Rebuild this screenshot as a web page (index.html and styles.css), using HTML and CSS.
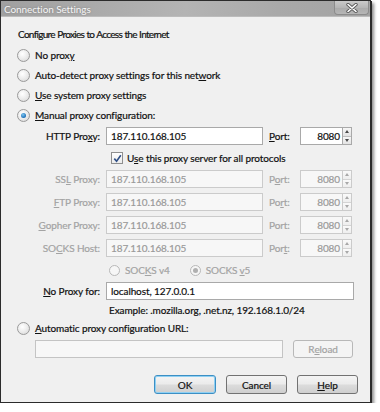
FILE: index.html
```html
<!DOCTYPE html>
<html>
<head>
<meta charset="utf-8">
<link rel="stylesheet" href="styles.css">
</head>
<body>
<div class="window">
  <div class="titlebar">
    <span class="title">Connection Settings</span>
    <div class="close">
      <svg width="12" height="10" viewBox="0 0 12 10">
        <path d="M2 1.5 L10 8.5 M10 1.5 L2 8.5" stroke="#5a5a5a" stroke-width="3.4" stroke-linecap="round"/>
        <path d="M2 1.5 L10 8.5 M10 1.5 L2 8.5" stroke="#ffffff" stroke-width="1.6" stroke-linecap="round"/>
      </svg>
    </div>
  </div>
  <div class="content">
    <div class="heading">Configure Proxies to Access the Internet</div>
    <div class="opt"><span class="radio"></span><span>No prox<u>y</u></span></div>
    <div class="opt"><span class="radio"></span><span>Auto-detect proxy settings for this net<u>w</u>ork</span></div>
    <div class="opt"><span class="radio"></span><span><u>U</u>se system proxy settings</span></div>
    <div class="opt"><span class="radio on"></span><span><u>M</u>anual proxy configuration:</span></div>

    <div class="prow first">
      <span class="plabel">HTTP Pro<u>x</u>y:</span>
      <div class="field">187.110.168.105</div>
      <span class="portlabel"><u>P</u>ort:</span>
      <div class="port"><div class="portval">8080</div><div class="spin"><span class="half"><i class="up"></i></span><span class="half"><i class="down"></i></span></div></div>
    </div>

    <div class="checkrow">
      <span class="check"><svg width="9" height="9" viewBox="0 0 9 9"><path d="M1.3 4.6 L3.6 7.2 L7.8 1.3" fill="none" stroke="#2f4f86" stroke-width="1.6"/></svg></span>
      <span>U<u>s</u>e this proxy server for all protocols</span>
    </div>

    <div class="prow dis ssl">
      <span class="plabel">SS<u>L</u> Proxy:</span>
      <div class="field">187.110.168.105</div>
      <span class="portlabel">P<u>o</u>rt:</span>
      <div class="port"><div class="portval">8080</div><div class="spin"><span class="half"><i class="up"></i></span><span class="half"><i class="down"></i></span></div></div>
    </div>
    <div class="prow dis">
      <span class="plabel"><u>F</u>TP Proxy:</span>
      <div class="field">187.110.168.105</div>
      <span class="portlabel">Po<u>r</u>t:</span>
      <div class="port"><div class="portval">8080</div><div class="spin"><span class="half"><i class="up"></i></span><span class="half"><i class="down"></i></span></div></div>
    </div>
    <div class="prow dis">
      <span class="plabel"><u>G</u>opher Proxy:</span>
      <div class="field">187.110.168.105</div>
      <span class="portlabel">Port:</span>
      <div class="port"><div class="portval">8080</div><div class="spin"><span class="half"><i class="up"></i></span><span class="half"><i class="down"></i></span></div></div>
    </div>
    <div class="prow dis">
      <span class="plabel">SO<u>C</u>KS Host:</span>
      <div class="field">187.110.168.105</div>
      <span class="portlabel">Por<u>t</u>:</span>
      <div class="port"><div class="portval">8080</div><div class="spin"><span class="half"><i class="up"></i></span><span class="half"><i class="down"></i></span></div></div>
    </div>

    <div class="socksrow">
      <span class="radio small dim"></span><span class="sv">SOC<u>K</u>S v4</span>
      <span class="radio small dim on"></span><span class="sv">SOCKS <u>v</u>5</span>
    </div>

    <div class="prow noproxy">
      <span class="plabel"><u>N</u>o Proxy for:</span>
      <div class="field wide">localhost, 127.0.0.1</div>
    </div>
    <div class="example">Example: .mozilla.org, .net.nz, 192.168.1.0/24</div>

    <div class="opt auto"><span class="radio"></span><span><u>A</u>utomatic proxy configuration URL:</span></div>
    <div class="urlrow">
      <div class="urlfield"></div>
      <div class="btn disabled">R<u>e</u>load</div>
    </div>

    <div class="buttons">
      <div class="btn default">OK</div>
      <div class="btn">Cancel</div>
      <div class="btn"><u>H</u>elp</div>
    </div>
  </div>
</div>
</body>
</html>
```

FILE: styles.css
```css
* { box-sizing: border-box; }
html, body { margin: 0; padding: 0; background: #ffffff; }
body {
  font-family: Lato, "Open Sans", sans-serif;
  font-size: 10px;
  letter-spacing: -0.1px;
  color: #111111;
  -webkit-text-stroke: 0.2px;
}
u { text-decoration: underline; text-underline-offset: 1px; }

.window {
  width: 371px;
  height: 403px;
  border: 1px solid #2b2b2b;
  background: #f0f0f0;
  box-shadow: 1px 1px 0 #2b2b2b, 3px 3px 3px rgba(0,0,0,0.45);
  display: flex;
  flex-direction: column;
}

.titlebar {
  height: 16px;
  flex: none;
  display: flex;
  align-items: flex-start;
  background: linear-gradient(100deg, #a0a0a0 0%, #acacac 30%, #b4b4b4 50%, #a9a9a9 75%, #a3a3a3 100%);
  border-bottom: 1px solid #bcbcbc;
}
.title {
  padding-left: 3px;
  line-height: 16px;
  color: #f6f6f6;
  -webkit-text-stroke: 0;
  text-shadow: 0 0 2px rgba(70,70,70,0.4);
}
.close {
  margin-left: auto;
  margin-right: 1px;
  width: 35px;
  height: 14px;
  background: linear-gradient(#cacaca, #b6b6b6 50%, #aaaaaa 51%, #b6b6b6);
  border: 1px solid #8c8c8c;
  border-top: none;
  border-radius: 0 0 4px 4px;
  display: flex;
  align-items: center;
  justify-content: center;
}

.content {
  padding: 7px 0 0 16px;
  flex: 1;
}

.heading {
  height: 20px;
  display: flex;
  align-items: center;
  padding-left: 1px;
  letter-spacing: -0.7px;
  word-spacing: 0.5px;
}

.opt {
  height: 20px;
  display: flex;
  align-items: center;
  gap: 5px;
}
.opt:nth-child(2) { margin-top: 1px; }

.radio {
  width: 13px;
  height: 13px;
  border-radius: 50%;
  border: 1px solid #9a9a9a;
  background: radial-gradient(circle at 40% 35%, #ffffff 0%, #eeeeee 45%, #d4d4d4 100%);
  flex: none;
  display: flex;
  align-items: center;
  justify-content: center;
}
.radio.on::after {
  content: "";
  width: 5px;
  height: 5px;
  border-radius: 50%;
  background: radial-gradient(circle at 40% 35%, #7fc6f0, #1c6fb8 70%, #1a4f86);
}
.radio.small { width: 11px; height: 11px; }
.radio.dim { border-color: #b8b8b8; background: #f6f6f6; }
.radio.dim.on::after { width: 5px; height: 5px; background: #b0b0b0; }

.prow {
  height: 18px;
  display: flex;
  align-items: center;
  margin-top: 5px;
}
.prow.first { margin-top: 2px; }
.prow.ssl { margin-top: 2px; }
.plabel {
  width: 83px;
  text-align: right;
  flex: none;
}
.field {
  margin-left: 6px;
  width: 157px;
  height: 18px;
  border: 1px solid #a9a9a9;
  background: #ffffff;
  padding-left: 4px;
  line-height: 16px;
  flex: none;
}
.field.wide { width: 248px; }
.portlabel {
  margin-left: 6px;
  width: 31px;
  flex: none;
}
.port {
  display: flex;
  height: 18px;
  flex: none;
}
.portval {
  width: 43px;
  height: 18px;
  border: 1px solid #a9a9a9;
  background: #ffffff;
  text-align: right;
  padding-right: 2px;
  line-height: 16px;
}
.spin {
  width: 9px;
  height: 18px;
  display: flex;
  flex-direction: column;
  border: 1px solid #a9a9a9;
  border-left: none;
}
.half {
  flex: 1;
  display: flex;
  align-items: center;
  justify-content: center;
  background: linear-gradient(#f7f7f7, #e3e3e3);
}
.half + .half { border-top: 1px solid #bdbdbd; }
.up, .down { width: 0; height: 0; border-left: 2.5px solid transparent; border-right: 2.5px solid transparent; }
.up { border-bottom: 3px solid #4a4a4a; }
.down { border-top: 3px solid #4a4a4a; }

.dis { color: #a3a3a3; }
.dis .field, .dis .portval, .dis .spin { border-color: #cbcbcb; background: #f7f7f7; color: #9a9a9a; }
.dis .half { background: linear-gradient(#fafafa, #eeeeee); }
.dis .half + .half { border-top-color: #d4d4d4; }
.dis .up { border-bottom-color: #a8a8a8; }
.dis .down { border-top-color: #a8a8a8; }

.checkrow {
  height: 20px;
  margin-top: 3px;
  display: flex;
  align-items: center;
  gap: 4px;
  padding-left: 94px;
}
.check {
  width: 12px;
  height: 12px;
  border: 1px solid #8f8f8f;
  background: linear-gradient(#ffffff, #ececec);
  display: flex;
  align-items: center;
  justify-content: center;
  flex: none;
}

.socksrow {
  height: 18px;
  margin-top: 4px;
  display: flex;
  align-items: center;
  padding-left: 92px;
  color: #a3a3a3;
}
.socksrow .sv { margin-left: 5px; }
.socksrow .sv:nth-child(2) { margin-right: 20px; }

.prow.noproxy { margin-top: 3px; }

.example {
  height: 16px;
  margin-top: 2px;
  line-height: 16px;
  padding-left: 92px;
}

.opt.auto { height: 16px; margin-top: 2px; }

.urlrow {
  margin-top: 4px;
  height: 18px;
  display: flex;
  padding-left: 18px;
}
.urlfield {
  width: 248px;
  height: 18px;
  border: 1px solid #c4c4c4;
  background: #f7f7f7;
}
.urlrow .btn { margin-left: 10px; width: 60px; height: 18px; }

.btn {
  width: 61px;
  height: 19px;
  border: 1px solid #727272;
  border-radius: 3px;
  background: linear-gradient(#f4f4f4 0%, #ebebeb 48%, #dcdcdc 52%, #cfcfcf 100%);
  display: flex;
  align-items: center;
  justify-content: center;
  color: #111111;
}
.btn.default {
  width: 62px;
  border-color: #3c8fc4;
  box-shadow: inset 0 0 0 1px #8fd0f3;
}
.btn.disabled {
  border-color: #b8b8b8;
  background: #f4f4f4;
  color: #a3a3a3;
}

.buttons {
  margin-top: 17px;
  display: flex;
  gap: 10px;
  padding-left: 137px;
}
```
